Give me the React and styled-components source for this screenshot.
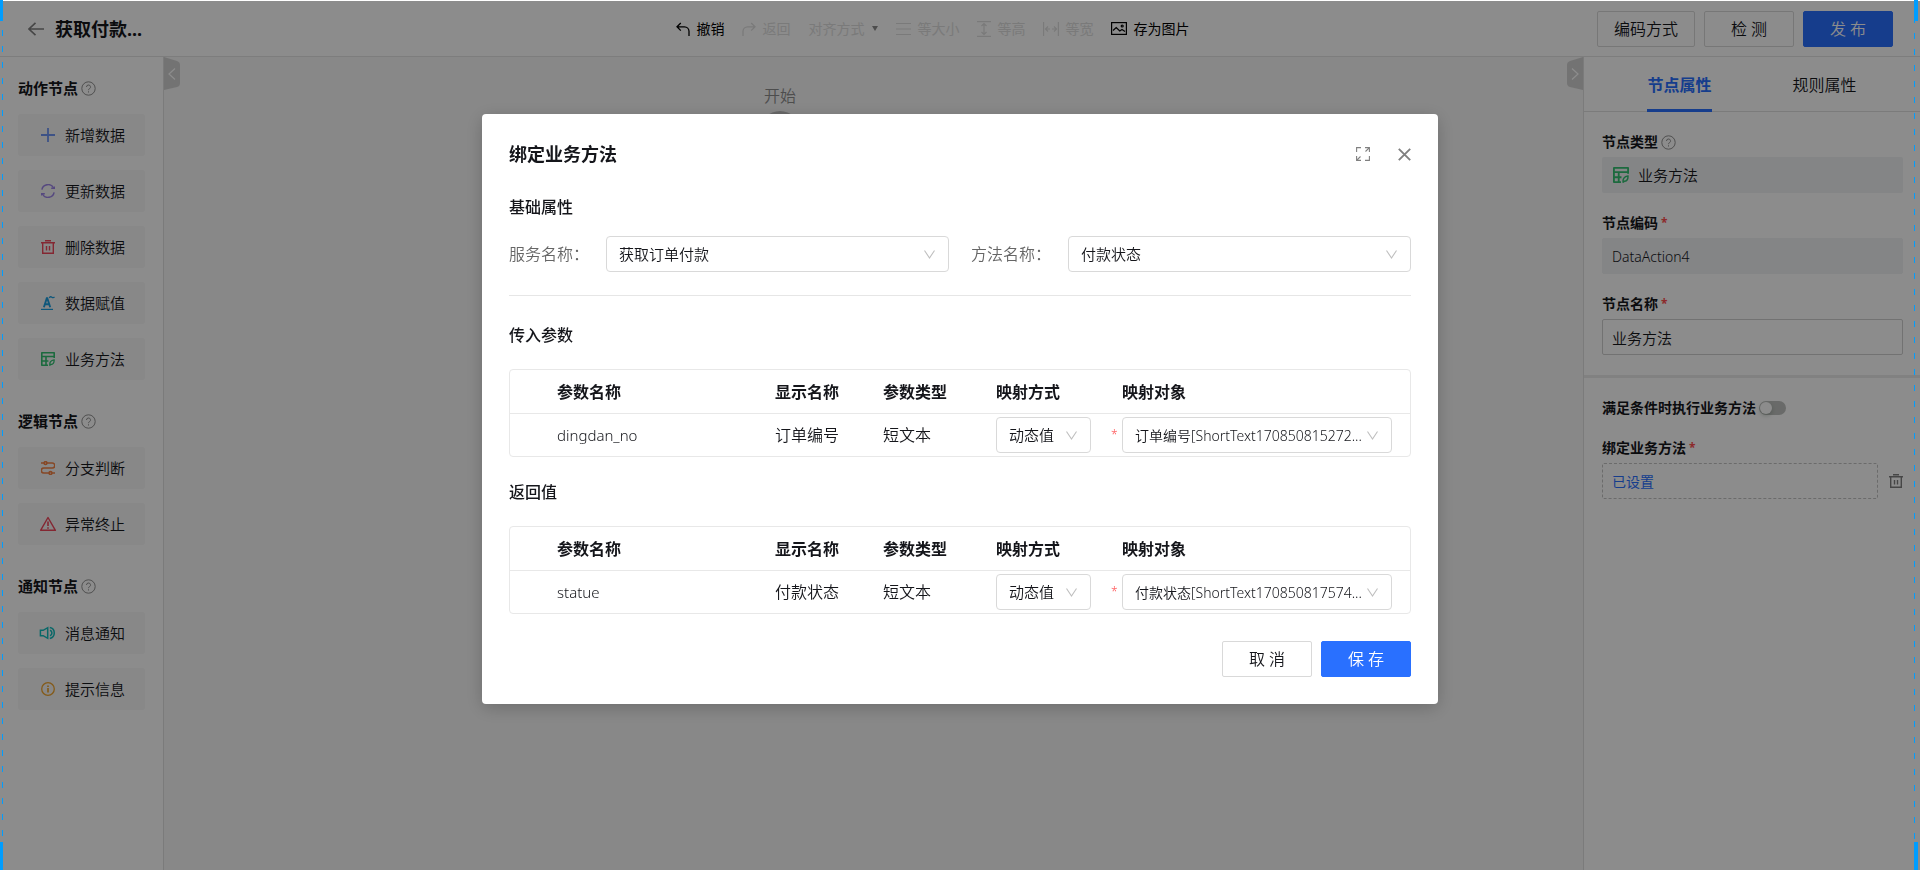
import React, { useState } from 'react';
import styled, { createGlobalStyle } from 'styled-components';

const GlobalStyle = createGlobalStyle`
  *, *::before, *::after {
    box-sizing: border-box;
  }

  body {
    margin: 0;
    color: #15161b;
    background: #fff;
  }

  body, button, input, select {
    font-family: 'Noto Sans', 'Noto Sans CJK SC', sans-serif;
    font-size: 15px;
    font-weight: 350;
  }

  h1, h2, h3, p {
    margin: 0;
  }
`;

const Page = styled.div`
  min-height: 100vh;
  padding-top: 1px;
  display: flex;
  flex-direction: column;
`;

/* ---------- header ---------- */

const Header = styled.header`
  display: flex;
  align-items: center;
  height: 56px;
  padding-right: 27px;
  border-bottom: 1px solid #e3e3e3;
  background: #fff;
`;

const HeaderTitle = styled.div`
  display: flex;
  align-items: center;
  gap: 11px;
  width: 269px;
  padding-left: 28px;

  h1 {
    font-size: 18px;
    line-height: 26px;
    font-weight: 700;
  }
`;

const IconButton = styled.button`
  display: flex;
  padding: 0;
  border: 0;
  background: none;
  color: #808080;
  cursor: pointer;
`;

const Toolbar = styled.div`
  flex: 1;
  display: flex;
  justify-content: center;
  gap: 18px;
`;

const ToolButton = styled.button`
  display: flex;
  align-items: center;
  gap: 6px;
  padding: 0;
  border: 0;
  background: none;
  font-size: 14px;
  line-height: 20px;
  font-weight: 400;
  color: #000;
  white-space: nowrap;
  cursor: pointer;

  &:disabled {
    color: #dedede;
    cursor: default;
  }
`;

const Caret = styled.span`
  margin-left: 2px;
  border: 3px solid transparent;
  border-top: 5px solid #8c8c8c;
  border-bottom: 0;
`;

const ButtonRow = styled.div`
  display: flex;
  justify-content: flex-end;
  gap: 9px;
  margin-top: ${(props) => props.$top || 0}px;
`;

const Button = styled.button`
  min-width: 90px;
  height: 36px;
  padding: 0 16px;
  border: 1px solid ${(props) => (props.$primary ? '#2970ff' : '#d9d9d9')};
  border-radius: 2px;
  background: ${(props) => (props.$primary ? '#2970ff' : '#fff')};
  color: ${(props) => (props.$primary ? '#fff' : '#15161b')};
  font-size: 16px;
  line-height: 24px;
  cursor: pointer;
`;

/* ---------- body ---------- */

const Body = styled.div`
  flex: 1;
  display: flex;
`;

const Sidebar = styled.aside`
  display: flex;
  flex-direction: column;
  gap: 29px;
  width: 164px;
  padding: 19px 18px;
  border-right: 1px solid #e0e0e0;
  background: #fff;
`;

const NodeGroup = styled.section`
  display: flex;
  flex-direction: column;
  gap: 14px;
`;

const GroupTitle = styled.h2`
  display: flex;
  align-items: center;
  gap: 3px;
  font-size: 15px;
  line-height: 24px;
  font-weight: 700;
`;

const NodeItem = styled.button`
  display: flex;
  align-items: center;
  gap: 10px;
  height: 42px;
  padding: 0 23px;
  border: 0;
  border-radius: 3px;
  background: #f7f7f8;
  line-height: 22px;
  color: #15161b;
  white-space: nowrap;
  cursor: grab;

  svg {
    flex: none;
    color: ${(props) => props.$color};
  }
`;

const Canvas = styled.main`
  flex: 1;
  position: relative;
  background: #f7f7f7;
`;

const Handle = styled.button`
  position: absolute;
  top: 0;
  ${(props) => props.$side}: 0;
  padding: 0;
  border: 0;
  background: none;
  display: flex;
  transform: ${(props) => (props.$side === 'right' ? 'scaleX(-1)' : 'none')};
`;

const StartNode = styled.div`
  position: absolute;
  left: 596px;
  top: 27px;
  width: 40px;
  display: flex;
  flex-direction: column;
  align-items: center;
  gap: 3px;
  font-size: 16px;
  line-height: 24px;
  color: #8c8c8c;

  &::after {
    content: '';
    width: 40px;
    height: 40px;
    border-radius: 50%;
    background: #bfbfbf;
  }
`;

/* ---------- right panel ---------- */

const Panel = styled.aside`
  width: 337px;
  border-left: 1px solid #e0e0e0;
  background: #fff;
`;

const Tabs = styled.div`
  display: flex;
  height: 55px;
  padding: 0 23px;
  border-bottom: 1px solid #e0e0e0;
`;

const Tab = styled.button`
  flex: 1;
  display: flex;
  justify-content: center;
  padding: 0;
  border: 0;
  background: none;
  font-size: 16px;
  line-height: 24px;
  font-weight: ${(props) => (props.$active ? 700 : 350)};
  color: ${(props) => (props.$active ? '#2970ff' : '#15161b')};

  span {
    height: 55px;
    padding-top: 16px;
    border-bottom: ${(props) => (props.$active ? '3px solid #2970ff' : '0')};
  }
`;

const FormSection = styled.div`
  display: flex;
  flex-direction: column;
  gap: ${(props) => (props.$divided ? 19 : 18)}px;
  padding: 19px 17px 20px 18px;
  border-bottom: ${(props) => (props.$divided ? '3px solid #ebebeb' : '0')};
`;

const Field = styled.div`
  display: flex;
  flex-direction: column;
  gap: 4px;
`;

const FieldLabel = styled.label`
  display: flex;
  align-items: center;
  gap: 3px;
  font-size: 14px;
  line-height: 22px;
  font-weight: 700;
`;

const Required = styled.span`
  color: #ff4d4f;
  font-size: 12px;
`;

const TypeBox = styled.div`
  display: flex;
  align-items: center;
  gap: 9px;
  height: 36px;
  padding: 0 11px;
  border-radius: 2px;
  background: #f0f2f5;
  line-height: 22px;

  svg {
    color: #33c172;
  }
`;

const TextInput = styled.input`
  width: 100%;
  height: 36px;
  padding: 0 9px;
  border: 1px solid #d0d0d0;
  border-radius: 2px;
  color: #15161b;
  background: #fff;

  &:read-only {
    border-color: #f0f2f5;
    background: #f0f2f5;
    font-size: 14px;
  }
`;

const Switch = styled.input`
  appearance: none;
  width: 27px;
  height: 14px;
  margin: 0;
  padding: 1px;
  border-radius: 7px;
  background: #bfc2bf;

  &::before {
    content: '';
    display: block;
    width: 12px;
    height: 12px;
    border-radius: 50%;
    background: #fff;
    box-shadow: 0 2px 4px rgba(0, 35, 11, 0.2);
  }

  &:checked {
    background: #2970ff;
  }

  &:checked::before {
    margin-left: 13px;
  }
`;

const BindRow = styled.div`
  display: flex;
  align-items: center;
  gap: 11px;
`;

const BindButton = styled.button`
  flex: 1;
  height: 36px;
  padding: 0 9px;
  border: 1px dashed #c4c4c4;
  border-radius: 2px;
  background: #fff;
  color: #2970ff;
  font-size: 14px;
  font-weight: 400;
  text-align: left;
`;

/* ---------- modal ---------- */

const Overlay = styled.div`
  position: fixed;
  inset: 1px 0 0;
  display: flex;
  justify-content: center;
  align-items: flex-start;
  padding-top: 113px;
  background: rgba(0, 0, 0, 0.45);
`;

const Modal = styled.div`
  width: 956px;
  max-width: 100%;
  padding: 27px;
  border-radius: 4px;
  background: #fff;
  box-shadow: 0 4px 18px rgba(0, 0, 0, 0.2);
`;

const ModalHeader = styled.div`
  display: flex;
  align-items: center;
  gap: 28px;
  margin-bottom: 28px;

  h2 {
    flex: 1;
    font-size: 18px;
    line-height: 26px;
    font-weight: 700;
  }
`;

const SectionTitle = styled.h3`
  font-size: 16px;
  line-height: 24px;
  font-weight: 500;
`;

const BaseFields = styled.div`
  display: grid;
  grid-template-columns: 1fr 1fr;
  gap: 22px;
  padding: 17px 0 23px;
  margin-bottom: 27px;
  border-bottom: 1px solid #e6e6e6;
`;

const BaseField = styled.div`
  display: flex;
  align-items: center;

  label {
    width: 97px;
    font-size: 16px;
    line-height: 24px;
    color: #666;
  }
`;

const SelectWrap = styled.div`
  position: relative;
  flex: ${(props) => (props.$width ? 'none' : 1)};
  width: ${(props) => (props.$width ? `${props.$width}px` : 'auto')};

  select {
    appearance: none;
    display: block;
    width: 100%;
    height: 36px;
    padding: 0 12px;
    border: 1px solid #d9d9d9;
    border-radius: 4px;
    background: #fff;
    color: #15161b;
    font-size: ${(props) => (props.$small ? 14 : 15)}px;
  }

  svg {
    position: absolute;
    right: 14px;
    top: 14px;
    color: #bfbfbf;
    pointer-events: none;
  }
`;

const ParamTable = styled.table`
  width: 100%;
  margin: 22px 0 23px;
  table-layout: fixed;
  border: 1px solid #e8e8e8;
  border-radius: 4px;
  border-spacing: 0;
  font-size: 16px;
  line-height: 24px;
  text-align: left;

  &:last-of-type {
    margin-bottom: 0;
  }

  th {
    height: 44px;
    padding: 0;
    border-bottom: 1px solid #e8e8e8;
    font-weight: 700;
  }

  th:last-child {
    padding-left: 11px;
  }

  td {
    height: 42px;
    padding: 0;
  }
`;

const ParamName = styled.td`
  font-size: 15px;
`;

const TargetCell = styled.div`
  display: flex;
  align-items: center;

  ${Required} {
    width: 11px;
  }
`;

/* ---------- frame guides ---------- */

const Guide = styled.div`
  position: fixed;
  top: 0;
  bottom: 0;
  width: 1px;
  background: repeating-linear-gradient(#009dff 0 6px, transparent 6px 16px);
  pointer-events: none;

  &::before,
  &::after {
    content: '';
    position: absolute;
    background: #009dff;
  }

  &::before {
    top: 0;
    height: 21px;
  }

  &::after {
    bottom: 0;
    height: 28px;
  }
`;

const LeftGuide = styled(Guide)`
  left: 2px;
  background-position: 0 14px;
  background-size: 1px 16px;

  &::before,
  &::after {
    right: 0;
    width: 3px;
  }
`;

const RightGuide = styled(Guide)`
  right: 5px;
  background-position: 0 1px;
  background-size: 1px 16px;

  &::before,
  &::after {
    left: 0;
    width: 4px;
  }
`;

/* ---------- icons ---------- */

const Icon = ({ size = 14, width, children, stroke = 1.2 }) => (
  <svg
    width={width || size}
    height={size}
    viewBox={`0 0 ${width || size} ${size}`}
    fill="none"
    stroke="currentColor"
    strokeWidth={stroke}
    aria-hidden="true"
  >
    {children}
  </svg>
);

const HelpIcon = () => (
  <svg width="15" height="15" viewBox="0 0 15 15" fill="none" stroke="#909090" aria-hidden="true">
    <circle cx="7.5" cy="7.5" r="6.7" />
    <path d="M5.5 6a2 2 0 1 1 3 1.7c-.7.4-1 .7-1 1.5" />
    <path d="M7.5 10.3v1.2" />
  </svg>
);

const BackIcon = () => (
  <Icon size={14} width={16} stroke={1.6}>
    <path d="M16 7H1M7.5 0.8L1 7l6.500 6.200" />
  </Icon>
);

const PlusIcon = () => (
  <Icon stroke={1.8}>
    <path d="M7 0v14M0 7h14" />
  </Icon>
);

const RefreshIcon = () => (
  <Icon stroke={1.5}>
    <path d="M.9 5.600A6.200 6.200 0 0 1 12.600 4.200M13.100 8.400A6.200 6.200 0 0 1 1.400 9.800" />
    <path d="M10.200 4.300h3.200V2.500M3.800 9.700H.6v1.800" />
  </Icon>
);

const TrashIcon = () => (
  <Icon stroke={1.4}>
    <path d="M0 2.700h14M4 .7h6M1.700 2.700v10.600h10.600V2.700M5.500 6v4.500M8.500 6v4.500" />
  </Icon>
);

const AssignIcon = () => (
  <Icon stroke={1.9}>
    <path d="M2.900 11.200L5.800 2.200h.5l2.900 9M3.900 8.200h4.300" />
    <path d="M0 13.400h12" strokeWidth="1.200" />
    <path d="M8.200 1.800c.9-1.300 1.800-1.300 2.700-.6s1.700.7 2.600-.4" strokeWidth="1.300" />
  </Icon>
);

const MethodIcon = ({ size = 14 }) => (
  <svg width={size} height={size} viewBox="0 0 14 14" fill="none" stroke="currentColor" strokeWidth="1.6" aria-hidden="true">
    <path d="M13.200 6V.8H.8v12.400H7M.8 4.500h12.400M.8 9h6.600M5 4.500v8.700" strokeLinejoin="round" />
    <path d="M8.900 13.200c-.5-2.600.8-5 4.200-5.300.2 3-1.200 4.600-3.200 4.600z" strokeWidth="1.300" />
  </svg>
);

const BranchIcon = () => (
  <Icon stroke={1.6}>
    <path d="M0 2h3M6 2h5.300a2.500 2.500 0 0 1 0 5H2.800a2.500 2.500 0 0 0 0 5H8M11 12h3" />
    <circle cx="4.500" cy="2" r="1.400" />
    <circle cx="9.500" cy="12" r="1.400" />
  </Icon>
);

const WarnIcon = () => (
  <svg width="14" height="14" viewBox="0 0 14 14" fill="none" stroke="currentColor" strokeWidth="1.4" overflow="visible" aria-hidden="true">
    <path d="M7 .5L14.400 13.300H-.4z" strokeLinejoin="round" />
    <path d="M7 4.500v4.500M7 10.200v1.600" strokeWidth="1.600" />
  </svg>
);

const SpeakerIcon = () => (
  <svg width="14" height="14" viewBox="0 0 14 14" fill="none" stroke="currentColor" strokeWidth="1.5" overflow="visible" aria-hidden="true">
    <path d="M-.6 4.300h2.800l4.500-2.600v10.600l-4.500-2.600H-.6z" />
    <path d="M9 4.200a3 3 0 0 1 0 5.600M8.800 1.600a5.500 5.500 0 0 1 0 10.800" />
  </svg>
);

const InfoIcon = () => (
  <Icon stroke={1.3}>
    <circle cx="7" cy="7" r="6.300" />
    <path d="M7 3.500v1.400M7 6v4.600" strokeWidth="1.700" />
  </Icon>
);

const UndoIcon = ({ flip }) => (
  <Icon stroke={1.3}>
    <path
      d="M4.800 1L1 4.800l3.800 3.800M1 4.800h7.500a4.500 4.500 0 0 1 4.500 4.500V14"
      transform={flip ? 'matrix(-1 0 0 1 14 0)' : undefined}
    />
  </Icon>
);

const LinesIcon = () => (
  <Icon width={15} size={14}>
    <path d="M0 1.500h15M0 7h15M0 12.500h15" />
  </Icon>
);

const HeightIcon = () => (
  <Icon size={16} width={14}>
    <path d="M0 .6h14M0 15.400h14M7 2.500v11M4.500 5L7 2.500 9.500 5M4.500 11L7 13.500 9.500 11" />
  </Icon>
);

const WidthIcon = () => (
  <Icon size={14} width={16}>
    <path d="M.6 0v14M15.400 0v14M2.500 7h4.500M9 7h4.500M5 4.500L2.500 7 5 9.500M11 4.500L13.500 7 11 9.500" />
  </Icon>
);

const PictureIcon = () => (
  <Icon size={13} width={16}>
    <rect x=".6" y=".6" width="14.800" height="11.800" />
    <path d="M2 8.500l3.200-3 3.600 3.500L11 7.500l3 2" />
    <circle cx="11.200" cy="4" r="1" />
  </Icon>
);

const ExpandIcon = () => (
  <Icon stroke={1.1}>
    <path d="M.6 5V.6H5M9 .6h4.400V5M13.400.6L9.500 4.500M.6 9v4.400H5M.6 13.400l3.900-3.900M13.400 9v4.400H9" />
  </Icon>
);

const CloseIcon = () => (
  <Icon size={13} stroke={1.9}>
    <path d="M.8.8l11.400 11.400M12.200.8L.8 12.200" />
  </Icon>
);

const ChevronIcon = () => (
  <Icon size={9} width={11} stroke={1.1}>
    <path d="M.5.5l5 7.500 5-7.500" />
  </Icon>
);

const HandleIcon = () => (
  <svg width="16" height="33" viewBox="0 0 16 33" aria-hidden="true">
    <path d="M0 0l13 4q3 1 3 4v18q0 3-3 4L0 33z" fill="#d2d2d2" />
    <path d="M11 11.500L5 17l6 5.500" fill="none" stroke="#fff" strokeWidth="1.200" />
  </svg>
);

/* ---------- data ---------- */

const nodeGroups = [
  {
    title: '动作节点',
    items: [
      { name: '新增数据', color: '#6f96f5', icon: <PlusIcon /> },
      { name: '更新数据', color: '#9d85e8', icon: <RefreshIcon /> },
      { name: '删除数据', color: '#f0475c', icon: <TrashIcon /> },
      { name: '数据赋值', color: '#1d9fe0', icon: <AssignIcon /> },
      { name: '业务方法', color: '#33c172', icon: <MethodIcon /> },
    ],
  },
  {
    title: '逻辑节点',
    items: [
      { name: '分支判断', color: '#f58345', icon: <BranchIcon /> },
      { name: '异常终止', color: '#f0475c', icon: <WarnIcon /> },
    ],
  },
  {
    title: '通知节点',
    items: [
      { name: '消息通知', color: '#12bdbd', icon: <SpeakerIcon /> },
      { name: '提示信息', color: '#f0a52d', icon: <InfoIcon /> },
    ],
  },
];

const inputParams = [
  { code: 'dingdan_no', name: '订单编号', type: '短文本', target: '订单编号[ShortText170850815272...' },
];

const returnParams = [
  { code: 'statue', name: '付款状态', type: '短文本', target: '付款状态[ShortText170850817574...' },
];

const Select = ({ id, label, value, width, small }) => (
  <SelectWrap $width={width} $small={small}>
    <select id={id} aria-label={label} defaultValue={value}>
      <option>{value}</option>
    </select>
    <ChevronIcon />
  </SelectWrap>
);

const Params = ({ rows }) => (
  <ParamTable>
    <colgroup>
      <col width="47" />
      <col width="218" />
      <col width="108" />
      <col width="113" />
      <col width="115" />
      <col />
    </colgroup>
    <thead>
      <tr>
        <th />
        <th>参数名称</th>
        <th>显示名称</th>
        <th>参数类型</th>
        <th>映射方式</th>
        <th>映射对象</th>
      </tr>
    </thead>
    <tbody>
      {rows.map((row) => (
        <tr key={row.code}>
          <td />
          <ParamName>{row.code}</ParamName>
          <td>{row.name}</td>
          <td>{row.type}</td>
          <td>
            <Select label="映射方式" value="动态值" width={95} />
          </td>
          <td>
            <TargetCell>
              <Required>*</Required>
              <Select label="映射对象" value={row.target} width={270} small />
            </TargetCell>
          </td>
        </tr>
      ))}
    </tbody>
  </ParamTable>
);

const App = () => {
  const [tab, setTab] = useState('node');
  const [nodeName, setNodeName] = useState('业务方法');
  const [open, setOpen] = useState(true);

  return (
    <Page>
      <GlobalStyle />
      <Header>
        <HeaderTitle>
          <IconButton aria-label="返回">
            <BackIcon />
          </IconButton>
          <h1>获取付款...</h1>
        </HeaderTitle>
        <Toolbar>
          <ToolButton><UndoIcon />撤销</ToolButton>
          <ToolButton disabled><UndoIcon flip />返回</ToolButton>
          <ToolButton disabled>对齐方式<Caret /></ToolButton>
          <ToolButton disabled><LinesIcon />等大小</ToolButton>
          <ToolButton disabled><HeightIcon />等高</ToolButton>
          <ToolButton disabled><WidthIcon />等宽</ToolButton>
          <ToolButton><PictureIcon />存为图片</ToolButton>
        </Toolbar>
        <ButtonRow>
          <Button>编码方式</Button>
          <Button>检 测</Button>
          <Button $primary>发 布</Button>
        </ButtonRow>
      </Header>

      <Body>
        <Sidebar>
          {nodeGroups.map((group) => (
            <NodeGroup key={group.title}>
              <GroupTitle>{group.title}<HelpIcon /></GroupTitle>
              {group.items.map((item) => (
                <NodeItem key={item.name} $color={item.color}>
                  {item.icon}
                  {item.name}
                </NodeItem>
              ))}
            </NodeGroup>
          ))}
        </Sidebar>

        <Canvas>
          <Handle $side="left" aria-label="收起"><HandleIcon /></Handle>
          <StartNode>开始</StartNode>
          <Handle $side="right" aria-label="收起"><HandleIcon /></Handle>
        </Canvas>

        <Panel>
          <Tabs>
            <Tab $active={tab === 'node'} onClick={() => setTab('node')}><span>节点属性</span></Tab>
            <Tab $active={tab === 'rule'} onClick={() => setTab('rule')}><span>规则属性</span></Tab>
          </Tabs>
          <FormSection $divided>
            <Field>
              <FieldLabel as="div">节点类型<HelpIcon /></FieldLabel>
              <TypeBox><MethodIcon size={16} />业务方法</TypeBox>
            </Field>
            <Field>
              <FieldLabel htmlFor="node-code">节点编码<Required>*</Required></FieldLabel>
              <TextInput id="node-code" value="DataAction4" readOnly />
            </Field>
            <Field>
              <FieldLabel htmlFor="node-name">节点名称<Required>*</Required></FieldLabel>
              <TextInput id="node-name" value={nodeName} onChange={(e) => setNodeName(e.target.value)} />
            </Field>
          </FormSection>
          <FormSection>
            <FieldLabel>
              满足条件时执行业务方法
              <Switch type="checkbox" role="switch" />
            </FieldLabel>
            <Field>
              <FieldLabel htmlFor="bind-method">绑定业务方法<Required>*</Required></FieldLabel>
              <BindRow>
                <BindButton id="bind-method" onClick={() => setOpen(true)}>已设置</BindButton>
                <IconButton aria-label="删除"><TrashIcon /></IconButton>
              </BindRow>
            </Field>
          </FormSection>
        </Panel>
      </Body>

      {open && (
        <Overlay>
          <Modal role="dialog" aria-labelledby="modal-title">
            <ModalHeader>
              <h2 id="modal-title">绑定业务方法</h2>
              <IconButton aria-label="全屏"><ExpandIcon /></IconButton>
              <IconButton aria-label="关闭" onClick={() => setOpen(false)}><CloseIcon /></IconButton>
            </ModalHeader>

            <SectionTitle>基础属性</SectionTitle>
            <BaseFields>
              <BaseField>
                <label htmlFor="service">服务名称：</label>
                <Select id="service" value="获取订单付款" />
              </BaseField>
              <BaseField>
                <label htmlFor="method">方法名称：</label>
                <Select id="method" value="付款状态" />
              </BaseField>
            </BaseFields>

            <SectionTitle>传入参数</SectionTitle>
            <Params rows={inputParams} />
            <SectionTitle>返回值</SectionTitle>
            <Params rows={returnParams} />

            <ButtonRow $top={27}>
              <Button onClick={() => setOpen(false)}>取 消</Button>
              <Button $primary onClick={() => setOpen(false)}>保 存</Button>
            </ButtonRow>
          </Modal>
        </Overlay>
      )}

      <LeftGuide />
      <RightGuide />
    </Page>
  );
};

export default App;
